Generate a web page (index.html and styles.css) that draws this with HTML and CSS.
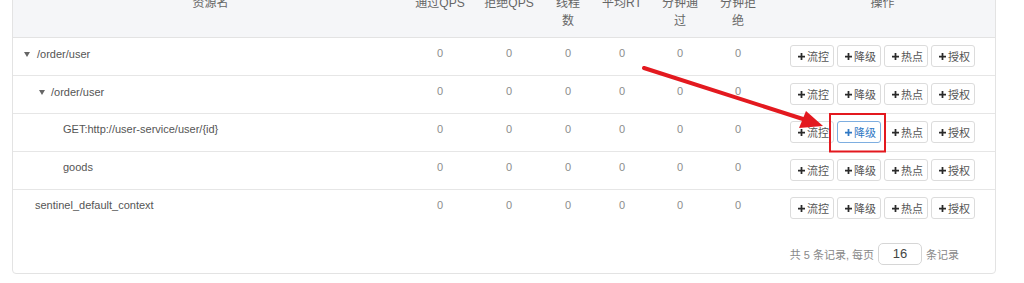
FILE: index.html
```html
<!DOCTYPE html>
<html>
<head>
<meta charset="utf-8">
<link rel="stylesheet" href="styles.css">
</head>
<body>
<div class="panel">
  <table class="grid">
    <colgroup>
      <col class="c-name"><col class="c-pass"><col class="c-block"><col class="c-thr"><col class="c-rt"><col class="c-mp"><col class="c-mb"><col class="c-op">
    </colgroup>
    <thead>
      <tr>
        <th>资源名</th>
        <th>通过QPS</th>
        <th>拒绝QPS</th>
        <th>线程<br>数</th>
        <th>平均RT</th>
        <th>分钟通<br>过</th>
        <th>分钟拒<br>绝</th>
        <th>操作</th>
      </tr>
    </thead>
    <tbody>
      <tr>
        <td class="name"><span class="node n0"><i class="caret"></i>/order/user</span></td>
        <td class="num">0</td><td class="num">0</td><td class="num">0</td><td class="num">0</td><td class="num">0</td><td class="num">0</td>
        <td class="ops"><div class="btns"><span class="btn"><svg class="plus" viewBox="0 0 8 8"><path d="M3 0h2v3h3v2H5v3H3V5H0V3h3z"/></svg>流控</span><span class="btn"><svg class="plus" viewBox="0 0 8 8"><path d="M3 0h2v3h3v2H5v3H3V5H0V3h3z"/></svg>降级</span><span class="btn"><svg class="plus" viewBox="0 0 8 8"><path d="M3 0h2v3h3v2H5v3H3V5H0V3h3z"/></svg>热点</span><span class="btn"><svg class="plus" viewBox="0 0 8 8"><path d="M3 0h2v3h3v2H5v3H3V5H0V3h3z"/></svg>授权</span></div></td>
      </tr>
      <tr>
        <td class="name"><span class="node n1"><i class="caret"></i>/order/user</span></td>
        <td class="num">0</td><td class="num">0</td><td class="num">0</td><td class="num">0</td><td class="num">0</td><td class="num">0</td>
        <td class="ops"><div class="btns"><span class="btn"><svg class="plus" viewBox="0 0 8 8"><path d="M3 0h2v3h3v2H5v3H3V5H0V3h3z"/></svg>流控</span><span class="btn"><svg class="plus" viewBox="0 0 8 8"><path d="M3 0h2v3h3v2H5v3H3V5H0V3h3z"/></svg>降级</span><span class="btn"><svg class="plus" viewBox="0 0 8 8"><path d="M3 0h2v3h3v2H5v3H3V5H0V3h3z"/></svg>热点</span><span class="btn"><svg class="plus" viewBox="0 0 8 8"><path d="M3 0h2v3h3v2H5v3H3V5H0V3h3z"/></svg>授权</span></div></td>
      </tr>
      <tr>
        <td class="name"><span class="leaf l2">GET:http://user-service/user/{id}</span></td>
        <td class="num">0</td><td class="num">0</td><td class="num">0</td><td class="num">0</td><td class="num">0</td><td class="num">0</td>
        <td class="ops"><div class="btns"><span class="btn"><svg class="plus" viewBox="0 0 8 8"><path d="M3 0h2v3h3v2H5v3H3V5H0V3h3z"/></svg>流控</span><span class="btn active"><svg class="plus" viewBox="0 0 8 8"><path d="M3 0h2v3h3v2H5v3H3V5H0V3h3z"/></svg>降级</span><span class="btn"><svg class="plus" viewBox="0 0 8 8"><path d="M3 0h2v3h3v2H5v3H3V5H0V3h3z"/></svg>热点</span><span class="btn"><svg class="plus" viewBox="0 0 8 8"><path d="M3 0h2v3h3v2H5v3H3V5H0V3h3z"/></svg>授权</span></div></td>
      </tr>
      <tr>
        <td class="name"><span class="leaf l2">goods</span></td>
        <td class="num">0</td><td class="num">0</td><td class="num">0</td><td class="num">0</td><td class="num">0</td><td class="num">0</td>
        <td class="ops"><div class="btns"><span class="btn"><svg class="plus" viewBox="0 0 8 8"><path d="M3 0h2v3h3v2H5v3H3V5H0V3h3z"/></svg>流控</span><span class="btn"><svg class="plus" viewBox="0 0 8 8"><path d="M3 0h2v3h3v2H5v3H3V5H0V3h3z"/></svg>降级</span><span class="btn"><svg class="plus" viewBox="0 0 8 8"><path d="M3 0h2v3h3v2H5v3H3V5H0V3h3z"/></svg>热点</span><span class="btn"><svg class="plus" viewBox="0 0 8 8"><path d="M3 0h2v3h3v2H5v3H3V5H0V3h3z"/></svg>授权</span></div></td>
      </tr>
      <tr class="last">
        <td class="name"><span class="leaf l0">sentinel_default_context</span></td>
        <td class="num">0</td><td class="num">0</td><td class="num">0</td><td class="num">0</td><td class="num">0</td><td class="num">0</td>
        <td class="ops"><div class="btns"><span class="btn"><svg class="plus" viewBox="0 0 8 8"><path d="M3 0h2v3h3v2H5v3H3V5H0V3h3z"/></svg>流控</span><span class="btn"><svg class="plus" viewBox="0 0 8 8"><path d="M3 0h2v3h3v2H5v3H3V5H0V3h3z"/></svg>降级</span><span class="btn"><svg class="plus" viewBox="0 0 8 8"><path d="M3 0h2v3h3v2H5v3H3V5H0V3h3z"/></svg>热点</span><span class="btn"><svg class="plus" viewBox="0 0 8 8"><path d="M3 0h2v3h3v2H5v3H3V5H0V3h3z"/></svg>授权</span></div></td>
      </tr>
    </tbody>
  </table>
  <div class="pager">
    <span>共 5 条记录, 每页</span>
    <span class="size">16</span>
    <span>条记录</span>
  </div>
</div>
<svg class="annot" width="1024" height="283" viewBox="0 0 1024 283">
  <line x1="644" y1="68" x2="806" y2="120" stroke="#e3191f" stroke-width="4" stroke-linecap="round"/>
  <polygon points="823,126 799,128 806,111" fill="#e3191f"/>
  <rect x="830" y="114" width="55" height="37.5" fill="none" stroke="#e3191f" stroke-width="2"/>
</svg>
</body>
</html>
```

FILE: styles.css
```css
* { box-sizing: border-box; }
html, body { margin: 0; padding: 0; background: #fff; }
body {
  position: relative;
  width: 1024px;
  height: 283px;
  overflow: hidden;
  font-family: "Liberation Sans", Arial, "Noto Sans CJK SC", sans-serif;
  color: #555;
}
.panel {
  margin: -15px 0 0 12px;
  width: 984px;
  border: 1px solid #e3e3e3;
  border-radius: 4px;
  overflow: hidden;
  background: #fff;
}
.grid {
  width: 100%;
  border-collapse: collapse;
  table-layout: fixed;
}
.c-name { width: 395px; }
.c-pass { width: 64px; }
.c-block { width: 74px; }
.c-thr { width: 44px; }
.c-rt { width: 64px; }
.c-mp { width: 52px; }
.c-mb { width: 64px; }
.c-op { width: 225px; }
.grid th {
  background: #f5f6f8;
  color: #666;
  font-weight: normal;
  font-size: 12px;
  line-height: 18px;
  padding: 8px 0 7px;
  text-align: center;
  vertical-align: top;
  white-space: nowrap;
  border-bottom: 1px solid #e3e3e3;
}
.grid td {
  font-size: 11px;
  line-height: 16px;
  height: 38px;
  padding: 7px 0 8px;
  vertical-align: top;
  border-bottom: 1px solid #e6e6e6;
  white-space: nowrap;
}
.grid tr.last td { border-bottom: none; }
.grid td.num { text-align: center; color: #8c8c8c; }
.grid td.name { color: #555; }
.node, .leaf { display: inline-flex; align-items: center; }
.n0 { padding-left: 11px; }
.n1 { padding-left: 26px; }
.l2 { padding-left: 50px; }
.l0 { padding-left: 22px; }
.caret {
  display: inline-block;
  width: 0;
  height: 0;
  border-left: 3.5px solid transparent;
  border-right: 3.5px solid transparent;
  border-top: 5px solid #666;
  margin-right: 7px;
  margin-top: 1px;
}
.n1 .caret { margin-right: 6px; }
.btns {
  display: flex;
  justify-content: center;
  gap: 3px;
}
.btn {
  display: inline-flex;
  align-items: center;
  height: 22px;
  width: 44px;
  padding: 0 3px 0 7px;
  border: 1px solid #dcdcdc;
  border-radius: 3px;
  background: #fff;
  color: #555;
  font-size: 11px;
  font-family: "Noto Sans CJK SC", "Liberation Sans", sans-serif;
  line-height: 20px;
}
.plus {
  width: 7px;
  height: 7px;
  margin-right: 2px;
  fill: #2a2a2a;
  flex: none;
}
.btn.active {
  border-color: #7eaee0;
  color: #2f78c4;
}
.btn.active .plus { fill: #2f78c4; }
.pager {
  display: flex;
  justify-content: flex-end;
  align-items: center;
  gap: 4px;
  padding: 15px 36px 8px 0;
  font-size: 11px;
  color: #888;
  font-family: "Liberation Sans", "Noto Sans CJK SC", sans-serif;
}
.size {
  display: inline-flex;
  align-items: center;
  justify-content: center;
  width: 44px;
  height: 22px;
  border: 1px solid #d6d6d6;
  border-radius: 5px;
  color: #444;
  font-size: 13px;
}
.annot {
  position: absolute;
  left: 0;
  top: 0;
  pointer-events: none;
}
```
